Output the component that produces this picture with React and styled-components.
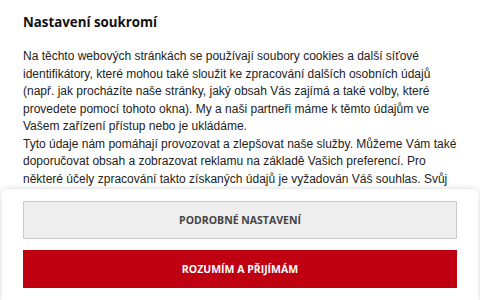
import styled, { createGlobalStyle } from "styled-components";

const GlobalStyle = createGlobalStyle`
  html, body {
    margin: 0;
    padding: 0;
    background: #ffffff;
  }
`;

const Dialog = styled.div`
  width: 480px;
  height: 300px;
  display: flex;
  flex-direction: column;
  overflow: hidden;
  background: #ffffff;
`;

const Body = styled.div`
  flex: 1;
  overflow: hidden;
  padding: 12px 20px 0 23px;
`;

const Title = styled.h2`
  margin: 0 0 16px;
  font-family: "Open Sans", "Noto Sans", sans-serif;
  font-size: 13.3px;
  font-weight: 700;
  line-height: 20px;
  color: #111111;
`;

const Text = styled.p`
  margin: 0;
  font-family: "Liberation Sans", Arial, sans-serif;
  font-size: 12px;
  line-height: 17.5px;
  color: #222222;
`;

const Footer = styled.div`
  flex-shrink: 0;
  height: 111px;
  margin: 0 2px;
  padding: 12px 21px 0;
  box-sizing: border-box;
  display: flex;
  flex-direction: column;
  gap: 11px;
  background: #ffffff;
  border-radius: 4px 4px 0 0;
  box-shadow: 0 0 6px rgba(0, 0, 0, 0.16);
`;

const Button = styled.button`
  height: 38px;
  width: 100%;
  box-sizing: border-box;
  border: 1px solid ${(p) => (p.$primary ? "#be0010" : "#c9c9c9")};
  background: ${(p) => (p.$primary ? "#be0010" : "#eeeeee")};
  color: ${(p) => (p.$primary ? "#ffffff" : "#444444")};
  font-family: "Open Sans", "Noto Sans", sans-serif;
  font-size: 10.5px;
  font-weight: 700;
  text-transform: uppercase;
  cursor: pointer;
`;

export default function App() {
  return (
    <>
      <GlobalStyle />
      <Dialog>
        <Body>
          <Title>Nastavení soukromí</Title>
          <Text>
            Na těchto webových stránkách se používají soubory cookies a další
            síťové identifikátory, které mohou také sloužit ke zpracování
            dalších osobních údajů (např. jak procházíte naše stránky, jaký
            obsah Vás zajímá a také volby, které provedete pomocí tohoto okna).
            My a naši partneři máme k těmto údajům ve Vašem zařízení přístup
            nebo je ukládáme.
            <br />
            Tyto údaje nám pomáhají provozovat a zlepšovat naše služby. Můžeme
            Vám také doporučovat obsah a zobrazovat reklamu na základě Vašich
            preferencí. Pro některé účely zpracování takto získaných údajů je
            vyžadován Váš souhlas. Svůj souhlas můžete kdykoli odvolat.
          </Text>
        </Body>
        <Footer>
          <Button>Podrobné nastavení</Button>
          <Button $primary>Rozumím a přijímám</Button>
        </Footer>
      </Dialog>
    </>
  );
}
